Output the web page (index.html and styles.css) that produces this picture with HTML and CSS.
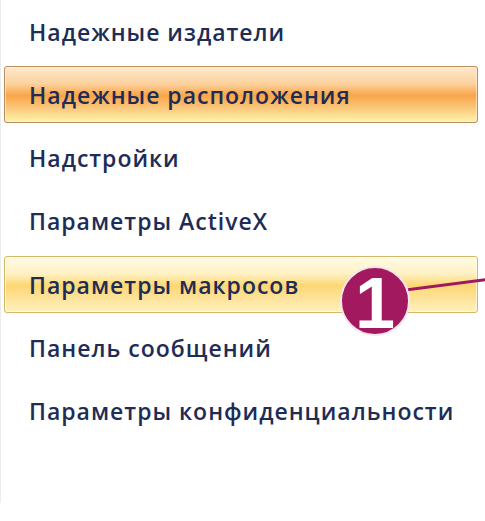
FILE: index.html
```html
<!DOCTYPE html>
<html>
<head>
<meta charset="utf-8">
<link rel="stylesheet" href="styles.css">
</head>
<body>
<div class="panel">
  <ul class="menu">
    <li class="item">Надежные издатели</li>
    <li class="item selected">Надежные расположения</li>
    <li class="item">Надстройки</li>
    <li class="item">Параметры ActiveX</li>
    <li class="item hover">Параметры макросов</li>
    <li class="item">Панель сообщений</li>
    <li class="item">Параметры конфиденциальности</li>
  </ul>
  <div class="callout">
    <svg class="callout-line" width="100" height="30" viewBox="0 0 100 30">
      <line x1="0" y1="22" x2="100" y2="9" stroke="#a0195e" stroke-width="3"/>
    </svg>
    <div class="badge">1</div>
  </div>
</div>
</body>
</html>
```
FILE: styles.css
```css
html, body {
  margin: 0;
  padding: 0;
  background: #ffffff;
}
.panel {
  position: relative;
  width: 485px;
  height: 503px;
  border-left: 1px solid #ececec;
  box-sizing: border-box;
  overflow: hidden;
}
.menu {
  list-style: none;
  margin: 0;
  padding: 3px 0 0 3px;
  display: flex;
  flex-direction: column;
  gap: 6.3px;
}
.item {
  width: 474px;
  height: 57px;
  box-sizing: border-box;
  display: flex;
  align-items: center;
  padding-left: 24px;
  border: 1px solid transparent;
  border-radius: 3px;
  font-family: "Open Sans", "Noto Sans", sans-serif;
  font-weight: 600;
  font-size: 23px;
  color: #1e2c56;
  letter-spacing: 1px;
}
.selected {
  border-color: #b88c5c;
  background: linear-gradient(to bottom, #fde9cc 0%, #fcd29e 30%, #f9a548 52%, #fbc073 70%, #fde69a 92%, #fff2b8 100%);
  box-shadow: inset 0 0 0 1px rgba(255,245,220,0.6);
}
.hover {
  border-color: #d8b867;
  background: linear-gradient(to bottom, #fffbe6 0%, #fff1c4 30%, #fcd774 52%, #fde195 72%, #fff2c0 100%);
  box-shadow: inset 0 0 0 1px rgba(255,255,240,0.6);
}
.callout {
  position: absolute;
  left: 339px;
  top: 266px;
  width: 146px;
  height: 70px;
}
.callout-line {
  position: absolute;
  left: 50px;
  top: 3.5px;
}
.badge {
  position: absolute;
  left: 0;
  top: 0;
  width: 70px;
  height: 70px;
  box-sizing: border-box;
  border-radius: 50%;
  background: #a3195f;
  border: 2px solid #f4e6ee;
  color: #ffffff;
  font-family: "Liberation Sans", Arial, sans-serif;
  font-weight: 700;
  font-size: 72px;
  line-height: 70px;
  text-align: center;
}
```
